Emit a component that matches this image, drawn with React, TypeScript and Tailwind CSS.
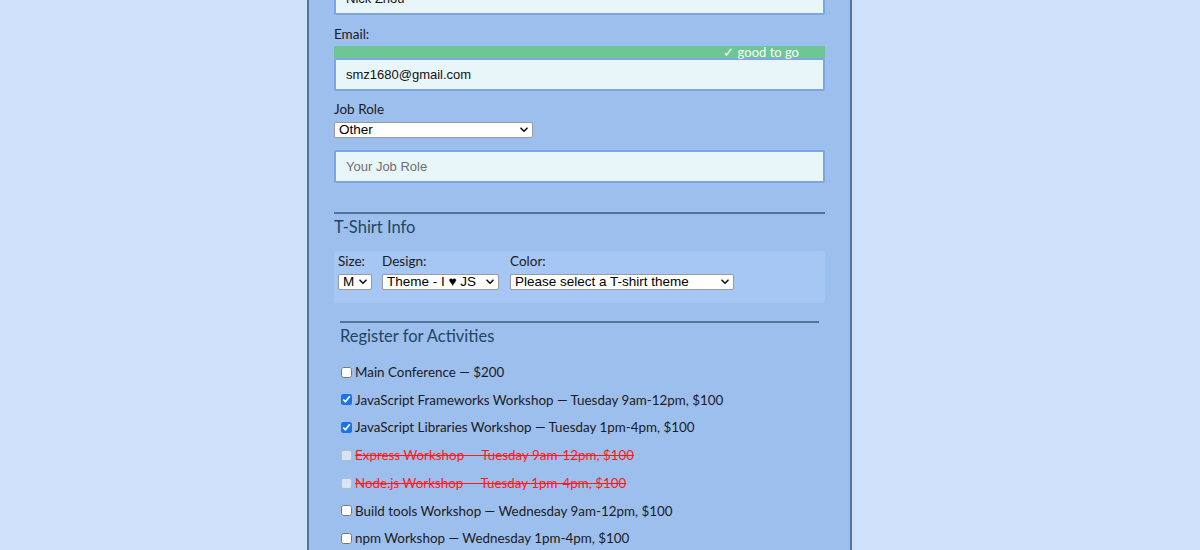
import React from "react"

const activities = [
  { label: "Main Conference — $200", checked: false, disabled: false },
  { label: "JavaScript Frameworks Workshop — Tuesday 9am-12pm, $100", checked: true, disabled: false },
  { label: "JavaScript Libraries Workshop — Tuesday 1pm-4pm, $100", checked: true, disabled: false },
  { label: "Express Workshop — Tuesday 9am-12pm, $100", checked: false, disabled: true },
  { label: "Node.js Workshop — Tuesday 1pm-4pm, $100", checked: false, disabled: true },
  { label: "Build tools Workshop — Wednesday 9am-12pm, $100", checked: false, disabled: false },
  { label: "npm Workshop — Wednesday 1pm-4pm, $100", checked: false, disabled: false },
]

const inputCls =
  "block w-full h-[33px] rounded-[2px] border-2 border-[#7ea6e6] bg-[#e8f6fa] px-[10px] text-[13px] text-[#111] outline-none font-['Liberation_Sans',Arial,sans-serif] placeholder:text-[#6f6f6f]"

function Select({ value, width }: { value: string; width: string }) {
  return (
    <div className={`relative h-[16px] ${width}`}>
      <select
        className="appearance-none block w-full h-[16px] py-0 pl-[4px] pr-[16px] bg-white border border-[#9a9a9a] rounded-[2px] text-[13.5px] leading-[14px] text-black font-['Liberation_Sans',Arial,sans-serif] outline-none"
        defaultValue={value}
      >
        <option value={value}>{value}</option>
      </select>
      {/* chevron */}
      <svg
        className="absolute right-[5px] top-[5px] pointer-events-none"
        width="8"
        height="6"
        viewBox="0 0 8 6"
        fill="none"
      >
        <path d="M1 1.2 4 4.2 7 1.2" stroke="#111" strokeWidth="1.6" strokeLinecap="round" strokeLinejoin="round" />
      </svg>
    </div>
  )
}

export default function App() {
  return (
    <div className="h-[550px] overflow-hidden bg-[#cfe0fa] flex pl-[307px] font-['Lato','Noto_Sans',sans-serif]">
      <div className="w-[545px] h-full bg-[#9dbfee] border-x-2 border-[#4f7598] px-[25px]">
        {/* name input, scrolled partly out of view */}
        <input className={`${inputCls} -mt-[18px]`} defaultValue="Nick Zhou" />

        <label className="block mt-[9px] text-[13.5px] leading-[20px] text-[#1b1b1b]">Email:</label>
        <div className="mt-[2px] h-[12px] bg-[#6ec596] flex justify-end items-center pr-[26px] text-[13px] text-white leading-none">
          ✓ good to go
        </div>
        <input className={inputCls} defaultValue="smz1680@gmail.com" />

        <label className="block mt-[8px] text-[13.5px] leading-[20px] text-[#1b1b1b]">Job Role</label>
        <div className="mt-[3px]">
          <Select value="Other" width="w-[199px]" />
        </div>

        <input className={`${inputCls} mt-[12px]`} placeholder="Your Job Role" />

        <div className="mt-[29px] h-[2px] bg-[#4f7598]" />
        <h2 className="mt-[1px] text-[16.5px] leading-[24px] text-[#22465f]">T-Shirt Info</h2>

        <div className="mt-[12px] h-[52px] rounded-[3px] bg-[#a6c6f3] px-[4px] flex gap-[10px] text-[13.5px] text-[#1b1b1b]">
          <div className="flex flex-col gap-[3px]">
            <span className="leading-[20px]">Size:</span>
            <Select value="M" width="w-[34px]" />
          </div>
          <div className="flex flex-col gap-[3px]">
            <span className="leading-[20px]">Design:</span>
            <Select value="Theme - I ♥ JS" width="w-[117px]" />
          </div>
          <div className="flex flex-col gap-[3px] ml-[1px]">
            <span className="leading-[20px]">Color:</span>
            <Select value="Please select a T-shirt theme" width="w-[224px]" />
          </div>
        </div>

        <div className="px-[6px]">
          <div className="mt-[18px] h-[2px] bg-[#4f7598]" />
          <h2 className="mt-[1px] text-[16.5px] leading-[24px] text-[#22465f]">Register for Activities</h2>
          <div className="mt-[15px] flex flex-col gap-[9.75px]">
            {activities.map((a) => (
              <label
                key={a.label}
                className={`flex items-center h-[18px] text-[13.4px] ${
                  a.disabled ? "text-[#ff1a1a] line-through" : "text-[#1b1b1b]"
                }`}
              >
                <input
                  type="checkbox"
                  defaultChecked={a.checked}
                  disabled={a.disabled}
                  className="m-0 mr-[3px] ml-[1px] w-[11px] h-[11px] accent-[#1a73e8]"
                />
                {a.label}
              </label>
            ))}
          </div>
        </div>
      </div>
    </div>
  )
}
